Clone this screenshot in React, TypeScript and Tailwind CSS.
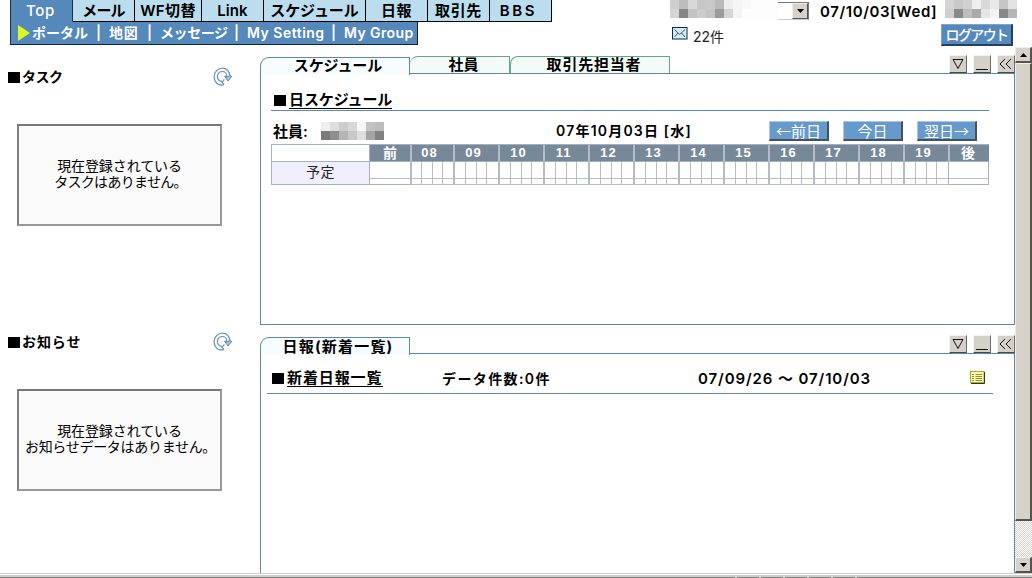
import clsx from "clsx";

const NAV_TABS = [
  { label: "メール", className: "w-[62px] tracking-[-0.8px]" },
  { label: "WF切替", className: "w-[67px] tracking-[0.4px]" },
  { label: "Link", className: "w-[62px] tracking-[0.1px]" },
  { label: "スケジュール", className: "w-[102px] tracking-[-0.1px]" },
  { label: "日報", className: "w-[62px] tracking-[0.6px]" },
  { label: "取引先", className: "w-[62px] tracking-[0.6px]" },
  { label: "BBS", className: "w-[62px] pr-1 tracking-[2.6px]" },
];

const SUB_MENU = [
  { label: "ポータル", className: "w-[64px]" },
  { label: "地図", className: "w-[38px] tracking-[0.8px]" },
  { label: "メッセージ", className: "w-[74px] tracking-[-0.4px]" },
  { label: "My Setting", className: "w-[84px] tracking-[0.5px]" },
  { label: "My Group", className: "w-[72px] tracking-[0.4px]" },
];

const HOURS = ["08", "09", "10", "11", "12", "13", "14", "15", "16", "17", "18", "19"];

const MOSAIC_USER = [
  "#cfcfcf", "#bdbdbd", "#d8d8d8", "#c6c6c6", "#c9c9c9", "#b9b9b9", "#eeeeee", "#f5f5f5", "#f9f9f9", "#fdfdfd", "#fdfdfd", "#fdfdfd",
  "#d6d6d6", "#858585", "#c4c4c4", "#cccccc", "#c4c4c4", "#9b9b9b", "#d4d4d4", "#f4f4f4", "#fdfdfd", "#fdfdfd", "#fdfdfd", "#fdfdfd",
];
const MOSAIC_NAME = [
  "#d5d5d5", "#cacaca", "#d0d0d0", "#eeeeee", "#d8d8d8", "#e8e8e8", "#c6c6c6", "#e3e3e3",
  "#cfcfcf", "#898989", "#bebebe", "#aaaaaa", "#e5e5e5", "#f3f3f3", "#888888", "#b5b5b5",
];
const MOSAIC_STAFF = [
  "#eeeeee", "#dddddd", "#cccccc", "#d8d8d8", "#f7f7f7", "#c2c2c2", "#bdbdbd",
  "#7b7b7b", "#8e8e8e", "#b5b5b5", "#c8c8c8", "#dedede", "#a4a4a4", "#828282",
];

function Mosaic({ colors, className }: { colors: string[]; className: string }) {
  return (
    <div className={clsx("grid grid-rows-2", className)}>
      {colors.map((c, i) => (
        <div key={i} style={{ backgroundColor: c }} />
      ))}
    </div>
  );
}

function RefreshIcon() {
  return (
    <svg width="20" height="20" viewBox="0 0 20 20" fill="none">
      <path d="M11 17.6C5 19.4 1 14.6 1.2 9.6C1.4 4.6 5 1.2 9.4 1.2C13.8 1.2 16.8 4.6 16.8 9" stroke="#7599bf" strokeWidth="1.3" />
      <path d="M9.4 14.4C6.4 14.4 4.4 12.2 4.4 9.4C4.4 6.6 6.6 4.4 9.4 4.4C12.2 4.4 13.8 6.6 13.8 9.4" stroke="#7599bf" strokeWidth="1.3" />
      <path d="M11 17.6L9 15.4L11.4 12.4" stroke="#7599bf" strokeWidth="1.3" />
      <path d="M11.6 9.2H13.6V10.2L17 8.6L18.8 9.4L15 14Z" fill="#a9c6e0" stroke="#5f87b0" strokeWidth="1" />
    </svg>
  );
}

function WindowButton({ kind }: { kind: "down" | "min" | "left" }) {
  return (
    <button className="flex h-[18px] w-[18px] items-center justify-center border border-t-[#f4f3ef] border-l-[#f4f3ef] border-r-[#6c6a66] border-b-[#4c4b48] bg-[#d5d0c8]">
      <svg width="16" height="16" viewBox="0 0 16 16" fill="none" stroke="#111" strokeWidth="1">
        {kind === "down" && <path d="M3 3.5H13L8 12.5Z" />}
        {kind === "min" && <path d="M2 13.5H14" />}
        {kind === "left" && <path d="M7 3L2 8L7 13M13 3L8 8L13 13" />}
      </svg>
    </button>
  );
}

function WindowButtons() {
  return (
    <div className="ml-auto flex gap-[6px]">
      <WindowButton kind="down" />
      <WindowButton kind="min" />
      <WindowButton kind="left" />
    </div>
  );
}

function SideBlock({ title, titleClass, lines }: { title: string; titleClass?: string; lines: { text: string; className: string }[] }) {
  return (
    <section className="h-[265px]">
      <div className="flex h-5 items-center pl-2">
        <span className="h-[11px] w-[12px] bg-black" />
        <h2 className={clsx("ml-[2px] w-[191px] text-[14px] font-bold", titleClass)}>{title}</h2>
        <RefreshIcon />
      </div>
      <div className="mt-[37px] ml-[17px] flex h-[102px] w-[205px] flex-col items-center justify-center border-2 border-[#808080] border-t-[#777] border-r-[#999] border-b-[#999] bg-[#fafafa] pb-[2px] text-[14px] leading-4">
        {lines.map((l) => (
          <p key={l.text} className={clsx("whitespace-nowrap", l.className)}>
            {l.text}
          </p>
        ))}
      </div>
    </section>
  );
}

function DayButton({ label, className }: { label: string; className?: string }) {
  return (
    <button
      className={clsx(
        "flex h-5 w-[60px] items-center justify-center border border-t-[#a9c8e6] border-l-[#a9c8e6] border-r-2 border-b-2 border-r-[#44525f] border-b-[#44525f] bg-[#6699cc] font-['Noto_Sans_CJK_JP',sans-serif] text-[15px] whitespace-nowrap text-white",
        className
      )}
    >
      {label}
    </button>
  );
}

function EmptyCell() {
  return (
    <div className="border-b border-l border-[#a3b1c2]">
      <div className="h-[17px] border-b border-[#b5bfcc]" />
    </div>
  );
}

function Timetable() {
  return (
    <div className="grid h-[41px] w-[718px] grid-cols-[98px_41px_43px_repeat(11,45px)_41px] grid-rows-[17px_23px] border-t border-r border-[#a3b1c2] text-center font-['Liberation_Sans','Noto_Sans_CJK_JP',sans-serif] text-[13px] leading-4 font-bold text-white">
      <div className="border-b border-l border-[#a3b1c2] bg-white" />
      <div className="border-b border-l border-[#a3b1c2] bg-[#778899] text-[14px]">前</div>
      {HOURS.map((h) => (
        <div key={h} className="border-b border-l-2 border-[#b3bcc8] border-b-[#a3b1c2] bg-[#778899] pr-[6px] tracking-[1px]">
          {h}
        </div>
      ))}
      <div className="border-b border-l-2 border-[#b3bcc8] border-b-[#a3b1c2] bg-[#778899] pr-[3px] text-[14px]">後</div>

      <div className="border-b border-l border-[#a3b1c2] bg-[#f0eefb] text-[14px] leading-[21px] font-normal tracking-[0.6px] text-[#222]">
        予定
      </div>
      <EmptyCell />
      {HOURS.map((h) => (
        <div key={h} className="grid grid-cols-4 grid-rows-[17px_5px] border-b border-l-2 border-[#b3bcc8]">
          {[0, 1, 2, 3, 4, 5, 6, 7].map((q) => (
            <div key={q} className={clsx("border-[#b5bfcc]", q % 4 < 3 && "border-r", q < 4 && "border-b")} />
          ))}
        </div>
      ))}
      <EmptyCell />
    </div>
  );
}

function ScrollButton({ up }: { up?: boolean }) {
  return (
    <div className="flex h-4 w-[17px] shrink-0 items-center justify-center border border-[#f0eee9] border-r-2 border-b-2 border-r-[#55534f] border-b-[#55534f] bg-[#d6d2ca]">
      <svg width="7" height="4" viewBox="0 0 7 4">
        <path d={up ? "M0 4L3.5 0L7 4Z" : "M0 0L3.5 4L7 0Z"} fill="#000" />
      </svg>
    </div>
  );
}

export default function App() {
  return (
    <div className="flex h-[578px] w-[1032px] flex-col overflow-hidden bg-white font-[Inter,'Noto_Sans_CJK_JP',sans-serif] text-[14px] leading-none text-black">
      {/* Header */}
      <header className="flex h-[47px] shrink-0">
        <div className="ml-[10px] h-[45px] w-[542px] border-l border-[#1c3048]">
          <nav className="flex h-[22px] text-[15px] font-semibold whitespace-nowrap">
            <div className="flex w-[62px] items-center justify-center border-r border-[#1c3048] border-b border-b-[#5588bb] bg-[#5588bb] pr-[2px] font-medium tracking-[0.6px] text-white">
              Top
            </div>
            {NAV_TABS.map((tab) => (
              <div
                key={tab.label}
                className={clsx("flex items-center justify-center border-r border-b border-black bg-[#bbddee]", tab.className)}
              >
                {tab.label}
              </div>
            ))}
          </nav>
          <nav className="flex h-[23px] w-[407px] items-center border-r border-b border-[#10243a] bg-[#5588bb] pl-[7px] text-[14px] font-semibold whitespace-nowrap text-white">
            <svg width="12" height="16" viewBox="0 0 12 16" className="mr-[2px]">
              <path d="M0 0L12 8L0 16Z" fill="#d8f820" />
            </svg>
            {SUB_MENU.map((item, i) => (
              <div key={item.label} className="flex shrink-0">
                {i > 0 && <span className="w-[13px]">|</span>}
                <span className={item.className}>{item.label}</span>
              </div>
            ))}
          </nav>
        </div>

        <div className="ml-[118px] w-[362px]">
          <div className="flex h-[21px] items-start">
            <div className="flex w-[139px]">
              <Mosaic colors={MOSAIC_USER} className="h-[18px] w-[108px] grid-cols-12" />
              <div className="mt-[2px] flex h-[18px] w-[31px] justify-end border border-l-0 border-[#777] border-b-[#ccc]">
                <div className="flex h-4 w-4 items-center justify-center border border-[#f0eee9] border-r-[#55534f] border-b-[#55534f] bg-[#d6d2ca]">
                  <svg width="7" height="4" viewBox="0 0 7 4">
                    <path d="M0 0L3.5 4L7 0Z" fill="#000" />
                  </svg>
                </div>
              </div>
            </div>
            <span className="mt-1 ml-[11px] w-[125px] text-[15px] font-semibold tracking-[0.6px] whitespace-nowrap">07/10/03[Wed]</span>
            <Mosaic colors={MOSAIC_NAME} className="h-[18px] w-[72px] grid-cols-8" />
          </div>
          <div className="flex h-[26px]">
            <svg width="16" height="13" viewBox="0 0 16 13" className="mt-[6px] ml-[2px]">
              <rect x="0.5" y="0.5" width="14.5" height="11.5" fill="#d4ecfa" stroke="#10283c" />
              <path d="M2.5 2.5L7.7 7.5L13 2.5M2.5 10L6 6M13 10L9.5 6" fill="none" stroke="#31566f" />
            </svg>
            <span className="mt-[9px] ml-[5px] w-[248px] text-[14px] text-[#222]">22件</span>
            <button className="mt-[3px] flex h-[22px] w-[72px] items-center justify-center border border-[#7aa5d0] border-r-2 border-b-2 border-r-[#24405c] border-b-[#24405c] bg-[#5588bb] text-[14px] font-medium tracking-[-1.6px] whitespace-nowrap text-white">
              ログアウト
            </button>
          </div>
        </div>
      </header>

      <div className="flex min-h-0 flex-1">
        {/* Side column */}
        <aside className="w-[260px] shrink-0 pt-5">
          <SideBlock
            title="タスク"
            titleClass="tracking-[-0.5px]"
            lines={[
              { text: "現在登録されている", className: "tracking-[-0.1px]" },
              { text: "タスクはありません。", className: "pl-[2px] tracking-[-0.7px]" },
            ]}
          />
          <SideBlock
            title="お知らせ"
            titleClass="tracking-[0.9px]"
            lines={[
              { text: "現在登録されている", className: "tracking-[-0.1px]" },
              { text: "お知らせデータはありません。", className: "pl-[2px] tracking-[-0.3px]" },
            ]}
          />
        </aside>

        {/* Portal panels */}
        <main className="w-[755px] shrink-0 pt-2">
          <section className="h-[282px]">
            <div className="flex h-[18px] text-[15px] font-bold tracking-[0.8px]">
              <div className="relative z-10 mt-[2px] flex h-[18px] w-[150px] items-center justify-center rounded-tl-[9px] border border-b-0 border-[#5e88a5] bg-[#f7fcff] pb-[2px] pl-[6px] tracking-[-0.1px]">
                スケジュール
              </div>
              <div className="mt-px flex h-[18px] w-[100px] items-center justify-center rounded-tl-[8px] border border-l-0 border-[#62a78c] border-b-[#5e88a5] bg-[#f4fbf6] pb-[2px] pl-2 tracking-normal">
                社員
              </div>
              <div className="mt-px flex h-[18px] w-[160px] items-center justify-center rounded-tl-[8px] border border-[#62a78c] border-b-[#5e88a5] bg-[#f4fbf6] pb-[2px] pl-2">
                取引先担当者
              </div>
              <WindowButtons />
            </div>
            <div className="h-[252px] border border-[#5e88a5] bg-white">
              <div className="ml-[10px] flex h-[37px] w-[718px] items-center border-b border-[#5e88a5] pt-4">
                <span className="ml-[3px] h-[11px] w-[12px] bg-black" />
                <h3 className="ml-[3px] border-b border-black pb-px text-[15px] font-bold tracking-[-0.1px]">日スケジュール</h3>
              </div>
              <div className="ml-[10px] flex h-[33px] w-[718px] items-center pt-[6px]">
                <span className="ml-[2px] w-[48px] pt-[2px] text-[15px] font-semibold">社員:</span>
                <Mosaic colors={MOSAIC_STAFF} className="h-[18px] w-[63px] grid-cols-7" />
                <span className="ml-[172px] w-[213px] text-[14px] font-semibold tracking-[1.2px] whitespace-nowrap">07年10月03日 [水]</span>
                <DayButton label="←前日" />
                <DayButton label="今日" className="ml-[14px]" />
                <DayButton label="翌日→" className="ml-[14px]" />
              </div>
              <div className="ml-[10px]">
                <Timetable />
              </div>
            </div>
          </section>

          <section className="h-[240px]">
            <div className="flex h-[16px] text-[15px] font-bold">
              <div className="relative z-10 flex h-[18px] w-[150px] items-center justify-center rounded-tl-[9px] border border-b-0 border-[#5e88a5] bg-[#f7fcff] pb-px pl-[6px] tracking-[1.2px]">
                日報(新着一覧)
              </div>
              <div className="-mt-[2px] ml-auto flex">
                <WindowButtons />
              </div>
            </div>
            <div className="h-[220px] border border-b-0 border-[#5e88a5] bg-white">
              <div className="ml-[6px] flex h-[40px] w-[726px] items-center border-b border-[#5e88a5] pt-[10px] text-[15px] font-semibold whitespace-nowrap">
                <span className="ml-[5px] h-[11px] w-[12px] bg-black" />
                <h3 className="ml-[3px] w-[96px] border-b border-black pb-px tracking-[0.9px]">新着日報一覧</h3>
                <span className="ml-[59px] w-[256px] text-[14px] tracking-[1.4px]">データ件数:0件</span>
                <span className="w-[272px] text-[15px] tracking-[0.9px]">07/09/26 ～ 07/10/03</span>
                <svg width="15" height="13" viewBox="0 0 15 13" className="-mt-[3px]">
                  <rect x="0.5" y="0.5" width="13.5" height="11" fill="#fbfcb0" stroke="#a5ad28" />
                  <path d="M14.5 1V12.5H1" fill="none" stroke="#333" />
                  <path d="M2 3.5H4M5.5 3.5H12M2 5.5H4M5.5 5.5H12M2 7.5H4M5.5 7.5H12M2 9.5H4M5.5 9.5H12" stroke="#8d9130" />
                </svg>
              </div>
            </div>
          </section>
        </main>

        {/* Scrollbar */}
        <div className="flex h-[526px] w-[17px] shrink-0 flex-col bg-[#e9e6e1]">
          <ScrollButton up />
          <div className="h-[458px] w-[17px] border border-[#f0eee9] border-r-2 border-b-2 border-r-[#55534f] border-b-[#55534f] bg-[#d6d2ca]" />
          <div className="flex-1 bg-[conic-gradient(#d6d2ca_25%,#fff_0_50%,#d6d2ca_0_75%,#fff_0)] bg-[length:2px_2px]" />
          <ScrollButton />
        </div>
      </div>

      {/* Window frame */}
      <footer className="h-[5px] shrink-0 border-t border-[#d0cec9] bg-white pt-px">
        <div className="h-[2px] bg-[#d0cfca]" />
        <div className="flex h-px bg-[#808080] pl-[735px]">
          {[0, 1, 2, 3, 4, 5].map((i) => (
            <span key={i} className="mr-[22px] h-px w-[2px] bg-[#e8e8e8]" />
          ))}
        </div>
      </footer>
    </div>
  );
}
